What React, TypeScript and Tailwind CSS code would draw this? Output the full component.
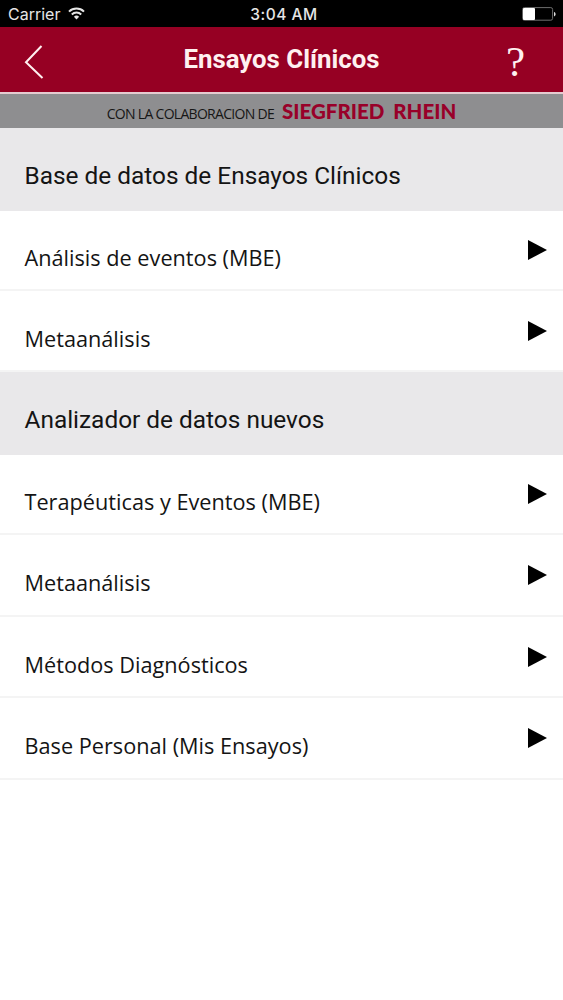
import React from 'react';

interface Section {
  title: string;
  items: { label: string; height: string }[];
}

const sections: Section[] = [
  {
    title: 'Base de datos de Ensayos Clínicos',
    items: [
      { label: 'Análisis de eventos (MBE)', height: 'h-[80px]' },
      { label: 'Metaanálisis', height: 'h-[81px]' },
    ],
  },
  {
    title: 'Analizador de datos nuevos',
    items: [
      { label: 'Terapéuticas y Eventos (MBE)', height: 'h-[80px]' },
      { label: 'Metaanálisis', height: 'h-[82px]' },
      { label: 'Métodos Diagnósticos', height: 'h-[81px]' },
      { label: 'Base Personal (Mis Ensayos)', height: 'h-[82px]' },
    ],
  },
];

function StatusBar() {
  return (
    <div className="h-[27px] bg-black text-[#e6e6e6] grid grid-cols-3 items-center pl-[8px] pr-[7px] font-['Inter',sans-serif] text-[16px] leading-none">
      <div className="flex items-center gap-[8px]">
        <span>Carrier</span>
        <svg width="17" height="13" viewBox="0 0 17 13" fill="none" stroke="currentColor" strokeWidth="2">
          <path d="M1 4.6a10.8 10.8 0 0 1 15 0" />
          <path d="M3.8 7.5a6.8 6.8 0 0 1 9.4 0" />
          <path d="M8.5 12.4 5.9 9.8a3.8 3.8 0 0 1 5.2 0z" fill="currentColor" stroke="none" />
        </svg>
      </div>
      <span className="text-center font-medium text-[15.5px] tracking-[0.5px] pt-[2px] pl-[4px]">3:04 AM</span>
      <svg className="justify-self-end" width="34" height="14" viewBox="0 0 34 14">
        <rect x="0.6" y="0.6" width="30" height="12.6" rx="1.8" fill="none" stroke="#6e6e6e" strokeWidth="1" />
        <rect x="1" y="1" width="12" height="12" rx="1" fill="#fff" />
        <path d="M32 5v4.4c1-.4 1.6-1.2 1.6-2.2S33 5.4 32 5z" fill="#ddd" />
      </svg>
    </div>
  );
}

function Header() {
  return (
    <header className="h-[67px] bg-[#960023] border-b-2 border-[#e5cbd0] grid grid-cols-[1fr_auto_1fr] items-center pl-[24px] pr-[38px] text-[#fff0f0]">
      <svg className="mt-[5px]" width="20" height="34" viewBox="0 0 20 34" fill="none" stroke="currentColor" strokeWidth="2">
        <path d="M17.5 1 2 17.2 18.5 33" />
      </svg>
      <h1 className="pl-[14px] font-['Roboto',sans-serif] font-bold text-[25.8px] leading-none">Ensayos Clínicos</h1>
      <span className="justify-self-end pt-[3px] font-['Liberation_Serif',serif] text-[43px] leading-none">?</span>
    </header>
  );
}

function Sponsor() {
  return (
    <div className="h-[34px] bg-[#8e8e90] flex items-baseline justify-center gap-[8px] leading-[34px]">
      <span className="font-['Open_Sans',sans-serif] text-[14px] tracking-[-0.7px] text-[#161616]">CON LA COLABORACION DE</span>
      <span className="font-['Lato',sans-serif] font-black text-[20.5px] [word-spacing:4px] text-[#990029]">SIEGFRIED RHEIN</span>
    </div>
  );
}

export default function App() {
  return (
    <div className="w-full min-h-screen bg-white text-[#141414]">
      <StatusBar />
      <Header />
      <Sponsor />
      {sections.map((section) => (
        <section key={section.title}>
          <h2 className="h-[83px] flex items-center bg-[#e9e8ea] pl-[24.5px] pt-[13px] font-['Roboto',sans-serif] text-[24.4px] leading-none">
            {section.title}
          </h2>
          <ul>
            {section.items.map((item) => (
              <li key={item.label} className={`${item.height} flex items-center justify-between border-b-2 border-[#f4f4f4] pl-[24.5px] pr-[16px]`}>
                <span className="pt-[16px] font-['Open_Sans',sans-serif] text-[21.7px] leading-none">{item.label}</span>
                <svg width="19" height="20" viewBox="0 0 19 20">
                  <path d="M0 0 19 10 0 20z" fill="#000" />
                </svg>
              </li>
            ))}
          </ul>
        </section>
      ))}
    </div>
  );
}
